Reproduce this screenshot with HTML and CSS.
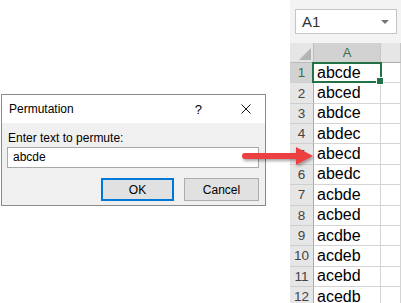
FILE: index.html
```html
<!DOCTYPE html>
<html lang="en">
<head>
    <meta charset="UTF-8">
    <title>Permutation</title>
    <link rel="stylesheet" href="styles.css">
</head>
<body>
    <div class="screen">
        <div class="left">
            <!-- Input dialog -->
            <div class="dialog">
                <div class="titlebar">
                    <span class="title">Permutation</span>
                    <span class="help">?</span>
                    <svg class="close" width="10" height="10" viewBox="0 0 10 10">
                        <path d="M0.5 0.5 L9.5 9.5 M9.5 0.5 L0.5 9.5" stroke="#111" stroke-width="1" fill="none"/>
                    </svg>
                </div>
                <div class="dialog-body">
                    <div class="prompt">Enter text to permute:</div>
                    <div class="textbox">abcde</div>
                    <div class="buttons">
                        <button class="btn btn-default">OK</button>
                        <button class="btn">Cancel</button>
                    </div>
                </div>
            </div>
        </div>

        <!-- Worksheet -->
        <div class="sheet">
            <div class="toolbar">
                <div class="namebox">
                    <span>A1</span>
                    <span class="caret"></span>
                </div>
            </div>
            <div class="grid">
                <div class="corner"><span class="corner-tri"></span></div>
                <div class="colhead selected">A</div>
                <div class="colhead"></div>

                <div class="rowhead selected">1</div><div class="cell active">abcde</div><div class="cell"></div>
                <div class="rowhead">2</div><div class="cell">abced</div><div class="cell"></div>
                <div class="rowhead">3</div><div class="cell">abdce</div><div class="cell"></div>
                <div class="rowhead">4</div><div class="cell">abdec</div><div class="cell"></div>
                <div class="rowhead">5</div><div class="cell">abecd</div><div class="cell"></div>
                <div class="rowhead">6</div><div class="cell">abedc</div><div class="cell"></div>
                <div class="rowhead">7</div><div class="cell">acbde</div><div class="cell"></div>
                <div class="rowhead">8</div><div class="cell">acbed</div><div class="cell"></div>
                <div class="rowhead">9</div><div class="cell">acdbe</div><div class="cell"></div>
                <div class="rowhead">10</div><div class="cell">acdeb</div><div class="cell"></div>
                <div class="rowhead">11</div><div class="cell">acebd</div><div class="cell"></div>
                <div class="rowhead">12</div><div class="cell">acedb</div><div class="cell"></div>
            </div>
        </div>

        <!-- Callout arrow -->
        <svg class="arrow" width="84" height="30" viewBox="0 0 84 30">
            <defs>
                <filter id="shadow" x="-10%" y="-30%" width="130%" height="180%">
                    <feDropShadow dx="1" dy="2" stdDeviation="1.5" flood-color="#000" flood-opacity="0.35"/>
                </filter>
            </defs>
            <g filter="url(#shadow)" fill="#ec4040">
                <path d="M9 10 L62 10 L62 16 L9 16 A3 3 0 0 1 9 10 Z"/>
                <path d="M60 4 L77 13 L60 22 Z"/>
            </g>
        </svg>
    </div>
</body>
</html>
```

FILE: styles.css
```css
* {
    box-sizing: border-box;
}

body {
    margin: 0;
    background: #fff;
    font-family: "Liberation Sans", Arial, sans-serif;
}

.screen {
    position: relative;
    display: flex;
    width: 401px;
    height: 303px;
    overflow: hidden;
}

.left {
    width: 290px;
    flex: none;
}

/* dialog */

.dialog {
    margin: 94px 0 0 1px;
    width: 265px;
    height: 112px;
    border: 1px solid #8a8a8a;
    display: flex;
    flex-direction: column;
}

.titlebar {
    height: 28px;
    flex: none;
    display: flex;
    align-items: center;
    padding: 0 14px 0 7px;
    background: #fff;
    font-size: 12px;
    color: #000;
}

.title {
    flex: 1;
}

.help {
    font-size: 13px;
    margin-right: 39px;
}

.close {
    display: block;
}

.dialog-body {
    flex: 1;
    background: #f0f0f0;
    padding: 8px 0 0 5px;
    font-size: 12px;
}

.prompt {
    height: 14px;
    line-height: 14px;
    padding-left: 1px;
    margin-bottom: 2px;
}

.textbox {
    width: 252px;
    height: 21px;
    border: 1px solid #a9a9a9;
    background: #fff;
    padding: 0 5px;
    line-height: 19px;
}

.buttons {
    width: 252px;
    display: flex;
    justify-content: flex-end;
    gap: 10px;
    margin-top: 10px;
}

.btn {
    height: 23px;
    width: 75px;
    border: 1px solid #adadad;
    background: #e1e1e1;
    font-family: "Liberation Sans", Arial, sans-serif;
    font-size: 12px;
    color: #000;
    padding: 0;
}

.btn-default {
    width: 73px;
    border: 2px solid #0078d7;
}

/* worksheet */

.sheet {
    flex: 1;
    background: #f3f3f3;
    display: flex;
    flex-direction: column;
}

.toolbar {
    height: 43px;
    flex: none;
    padding: 9px 4px 0 5px;
}

.namebox {
    height: 25px;
    background: #fff;
    border: 1px solid #c6c6c6;
    display: flex;
    align-items: center;
    justify-content: space-between;
    padding: 0 7px 0 6px;
    font-size: 15px;
    color: #333;
}

.caret {
    width: 0;
    height: 0;
    border-left: 4px solid transparent;
    border-right: 4px solid transparent;
    border-top: 4px solid #777;
}

.grid {
    display: grid;
    grid-template-columns: 24px 67px 1fr;
    grid-template-rows: 20px repeat(12, 20.36px);
    background: #fff;
}

.corner {
    position: relative;
    background: #e6e6e6;
    border-right: 1px solid #bcbcbc;
    border-bottom: 1px solid #bcbcbc;
}

.corner-tri {
    position: absolute;
    right: 2px;
    bottom: 2px;
    width: 0;
    height: 0;
    border-left: 12px solid transparent;
    border-bottom: 12px solid #b4b4b4;
}

.colhead {
    background: #e6e6e6;
    border-right: 1px solid #c8c8c8;
    border-bottom: 1px solid #ababab;
    text-align: center;
    font-size: 13px;
    line-height: 20px;
    color: #444;
}

.colhead.selected {
    background: #d2d2d2;
    color: #3d6e47;
}

.rowhead {
    background: #e6e6e6;
    border-right: 1px solid #ababab;
    border-bottom: 1px solid #cfcfcf;
    text-align: center;
    font-size: 13.5px;
    display: flex;
    align-items: center;
    justify-content: center;
    color: #444;
}

.rowhead.selected {
    background: #d2d2d2;
    color: #3d6e47;
}

.cell {
    border-right: 1px solid #d4d4d4;
    border-bottom: 1px solid #d4d4d4;
    font-size: 16px;
    padding-left: 3px;
    display: flex;
    align-items: center;
    color: #000;
}

.cell.active {
    position: relative;
}

.cell.active::before {
    content: "";
    position: absolute;
    left: -2px;
    top: -1px;
    right: -2px;
    bottom: -1px;
    border: 2px solid #217346;
}

.cell.active::after {
    content: "";
    position: absolute;
    right: -4px;
    bottom: -3px;
    width: 6px;
    height: 6px;
    background: #217346;
    border: 1px solid #fff;
}

.arrow {
    position: absolute;
    left: 236px;
    top: 143px;
}
```
